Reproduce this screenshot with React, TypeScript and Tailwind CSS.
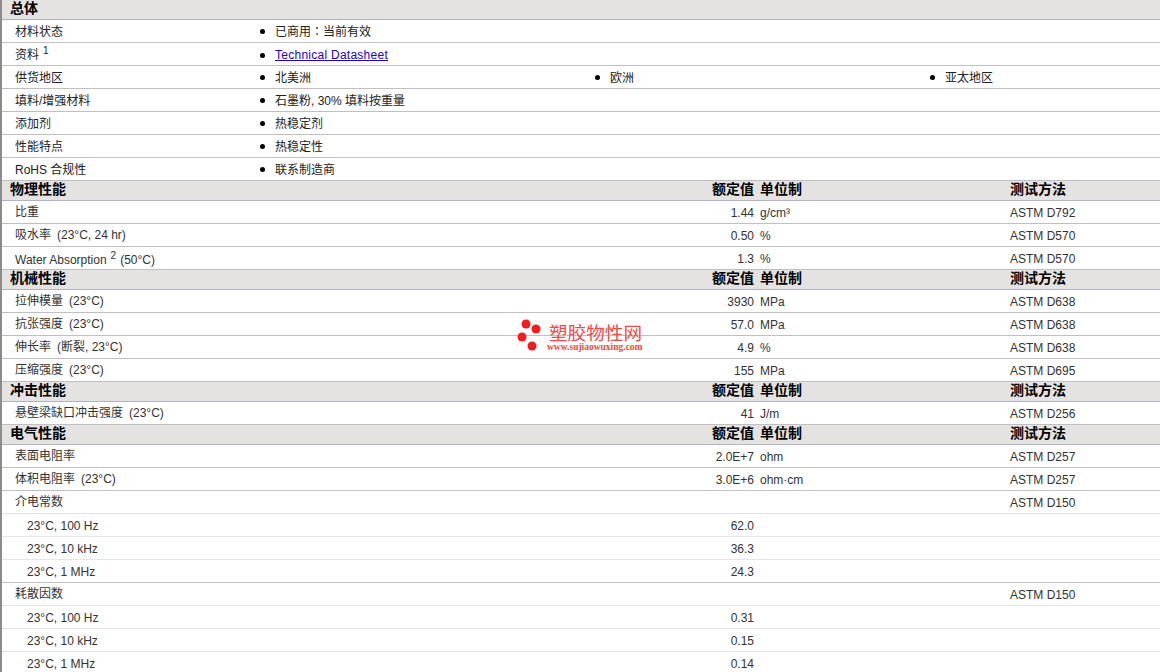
import React from 'react';

const font = "font-['Liberation_Sans','Noto_Sans_CJK_SC',sans-serif]";

const Head = ({ title, cols = true }: { title: string; cols?: boolean }) => (
  <div className="h-[20px] pb-[3px] flex items-center bg-[#e4e3e1] border-b border-[#b4b4c0] text-sm font-bold text-black">
    <div className="w-[706px] shrink-0 pl-2">{title}</div>
    {cols && (
      <>
        <div className="w-[46px] shrink-0 text-right">额定值</div>
        <div className="w-[256px] shrink-0 pl-1.5">单位制</div>
        <div>测试方法</div>
      </>
    )}
  </div>
);

const InfoRow = ({ label, items, sup }: { label: string; items: React.ReactNode[]; sup?: string }) => (
  <div className={`h-[23px] flex items-center border-b border-[#c0c0c0] text-xs text-[#222] ${sup ? 'pt-[2px]' : 'pt-px'}`}>
    <div className="w-[256px] shrink-0 pl-[13px]">
      {label}
      {sup && <sup className="ml-1 text-[10px]">{sup}</sup>}
    </div>
    <div className="flex-1 flex">
      {items.map((item, i) => (
        <div key={i} className="w-[335px] shrink-0 flex items-center">
          <span className="w-[5px] h-[5px] rounded-full bg-black ml-[2px] mr-[10px]" />
          {item}
        </div>
      ))}
    </div>
  </div>
);

const DataRow = ({ label, sup, suffix, value, unit, test, sub, light }: {
  label: string; sup?: string; suffix?: string; value?: string; unit?: string; test?: string; sub?: boolean; light?: boolean;
}) => (
  <div className={`h-[23px] flex items-center border-b text-xs text-[#333] ${light ? 'border-[#e6e6e6]' : 'border-[#c0c0c0]'}`}>
    <div className={`w-[706px] shrink-0 ${sub ? 'pl-[25px] pt-[2px]' : 'pl-[13px]'} ${sup ? 'pt-[4px]' : ''}`}>
      {label}
      {sup && <sup className="mx-1 text-[10px]">{sup}</sup>}
      {suffix && <span className={sup ? '' : 'ml-1.5'}>{suffix}</span>}
    </div>
    <div className="w-[46px] shrink-0 pt-[2px] text-right">{value}</div>
    <div className="w-[256px] shrink-0 pt-[2px] pl-1.5">{unit}</div>
    <div className="pt-[2px]">{test}</div>
  </div>
);

const Watermark = () => (
  <div className="absolute left-[515px] top-[319px] flex items-start gap-1">
    <svg width="26" height="34" viewBox="0 0 26 34">
      <circle cx="9" cy="5" r="4.5" fill="#f31b1b" />
      <circle cx="19" cy="10" r="4.5" fill="#f31b1b" />
      <circle cx="5" cy="18" r="4.5" fill="#f31b1b" />
      <circle cx="15" cy="27" r="4.5" fill="#f31b1b" />
    </svg>
    <div className="mt-[6px] flex flex-col items-start text-[#f04a4a]">
      <div className="ml-[2px] text-[18.6px] leading-[18px] whitespace-nowrap">塑胶物性网</div>
      <div className="font-['Liberation_Serif',serif] font-bold text-[9.5px] leading-[9px] whitespace-nowrap">www.sujiaowuxing.com</div>
    </div>
  </div>
);

export default function App() {
  return (
    <div className={`relative h-[672px] w-[1160px] overflow-hidden bg-white border-l-2 border-[#8c8c8c] ${font}`}>
      <Head title="总体" cols={false} />
      <InfoRow label="材料状态" items={[<span>已商用<span className="font-['Noto_Sans_CJK_TC']">：</span>当前有效</span>]} />
      <InfoRow label="资料" sup="1" items={[<a className="text-[#2200cc] underline tracking-[0.26px]">Technical Datasheet</a>]} />
      <InfoRow label="供货地区" items={['北美洲', '欧洲', '亚太地区']} />
      <InfoRow label="填料/增强材料" items={['石墨粉, 30% 填料按重量']} />
      <InfoRow label="添加剂" items={['热稳定剂']} />
      <InfoRow label="性能特点" items={['热稳定性']} />
      <InfoRow label="RoHS 合规性" items={['联系制造商']} />

      <Head title="物理性能" />
      <DataRow label="比重" value="1.44" unit="g/cm³" test="ASTM D792" />
      <DataRow label="吸水率" suffix="(23°C, 24 hr)" value="0.50" unit="%" test="ASTM D570" />
      <DataRow label="Water Absorption" sup="2" suffix="(50°C)" value="1.3" unit="%" test="ASTM D570" />

      <Head title="机械性能" />
      <DataRow label="拉伸模量" suffix="(23°C)" value="3930" unit="MPa" test="ASTM D638" />
      <DataRow label="抗张强度" suffix="(23°C)" value="57.0" unit="MPa" test="ASTM D638" />
      <DataRow label="伸长率" suffix="(断裂, 23°C)" value="4.9" unit="%" test="ASTM D638" />
      <DataRow label="压缩强度" suffix="(23°C)" value="155" unit="MPa" test="ASTM D695" />

      <Head title="冲击性能" />
      <DataRow label="悬壁梁缺口冲击强度" suffix="(23°C)" value="41" unit="J/m" test="ASTM D256" />

      <Head title="电气性能" />
      <DataRow label="表面电阻率" value="2.0E+7" unit="ohm" test="ASTM D257" />
      <DataRow label="体积电阻率" suffix="(23°C)" value="3.0E+6" unit="ohm·cm" test="ASTM D257" />
      <DataRow label="介电常数" test="ASTM D150" light />
      <DataRow label="23°C, 100 Hz" value="62.0" sub light />
      <DataRow label="23°C, 10 kHz" value="36.3" sub light />
      <DataRow label="23°C, 1 MHz" value="24.3" sub />
      <DataRow label="耗散因数" test="ASTM D150" light />
      <DataRow label="23°C, 100 Hz" value="0.31" sub light />
      <DataRow label="23°C, 10 kHz" value="0.15" sub light />
      <DataRow label="23°C, 1 MHz" value="0.14" sub light />

      <Watermark />
    </div>
  );
}
